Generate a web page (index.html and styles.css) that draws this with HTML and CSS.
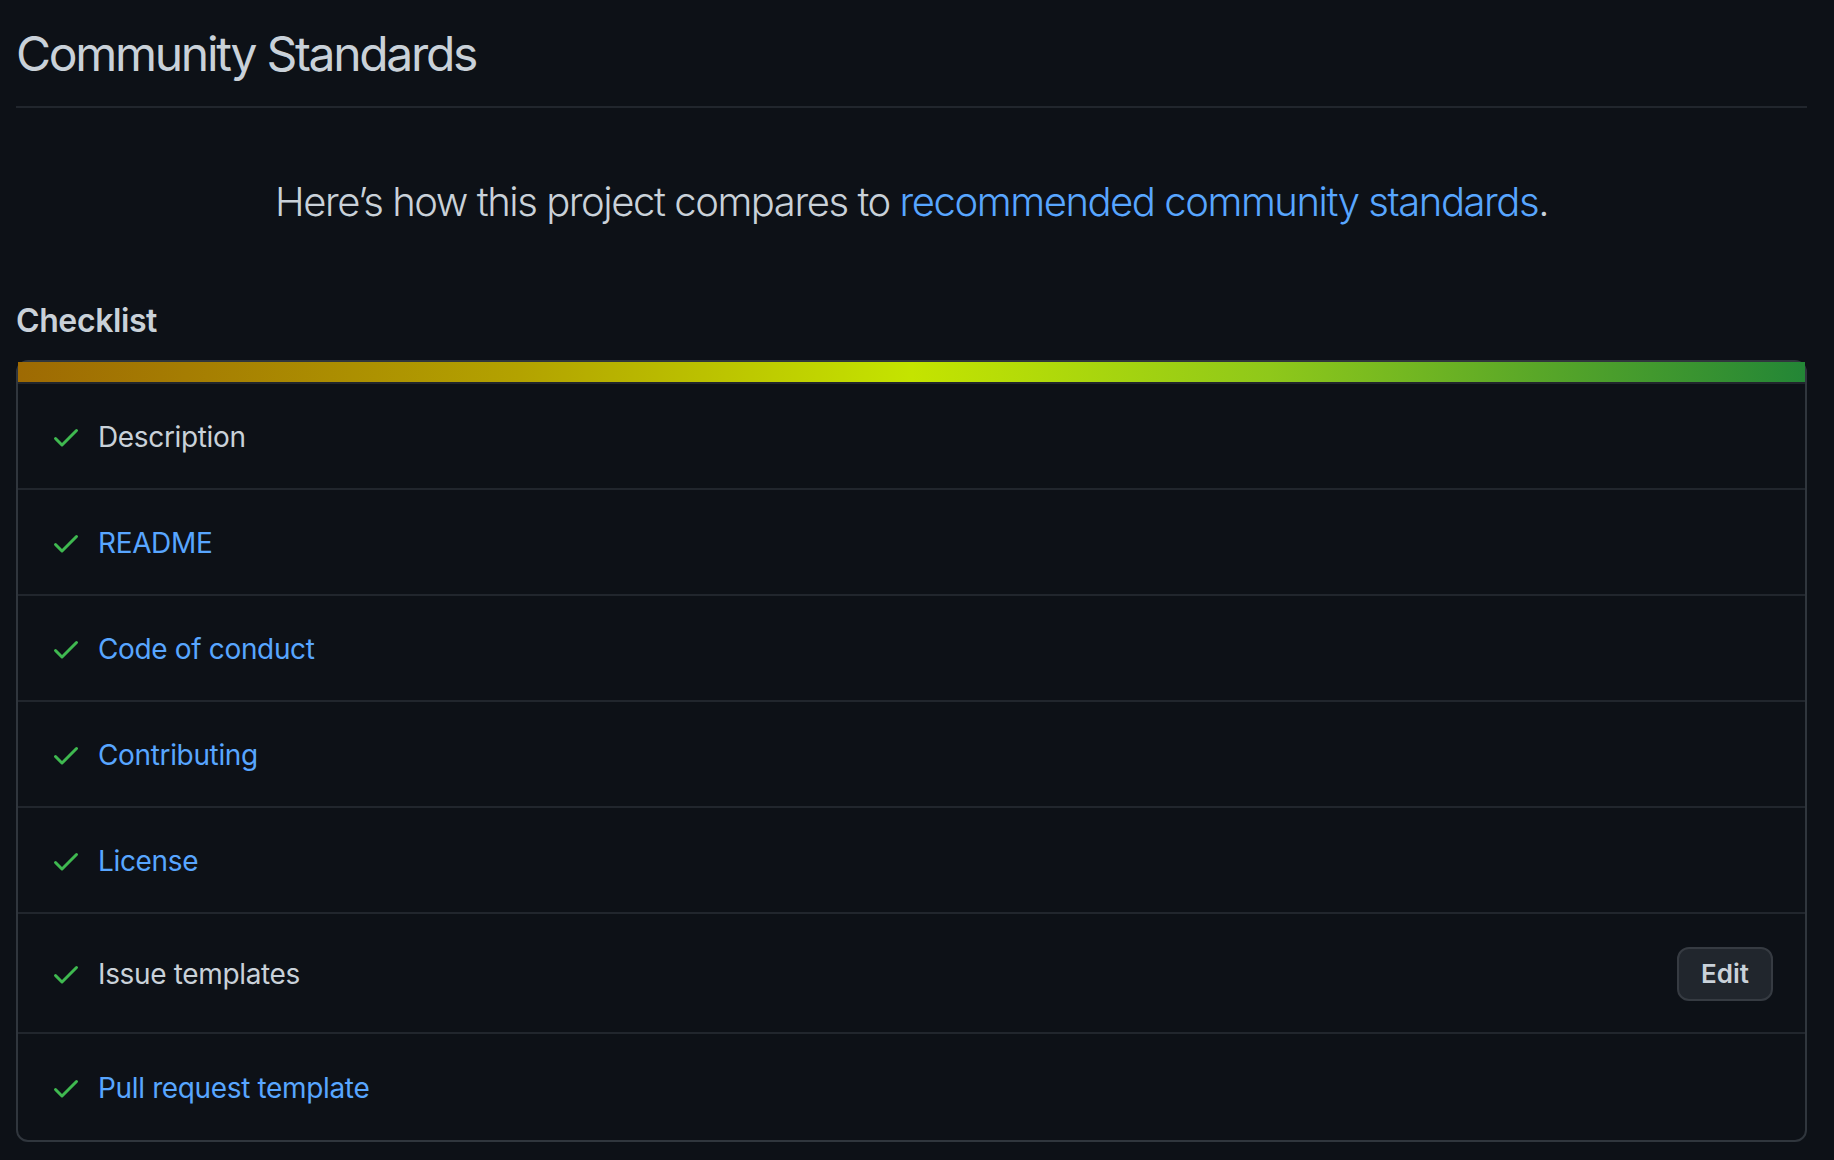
FILE: index.html
```html
<!DOCTYPE html>
<html lang="en">
<head>
<meta charset="utf-8">
<title>Community Standards</title>
<link rel="stylesheet" href="styles.css">
</head>
<body>
<main class="page">
  <h2 class="subhead">Community Standards</h2>
  <p class="lead">Here’s how this project compares to <a href="#" class="link">recommended community standards</a>.</p>
  <h3 class="section-title">Checklist</h3>
  <div class="box">
    <div class="progress"></div>
    <div class="row">
      <svg class="check" viewBox="0 0 16 16" width="32" height="32"><path d="M13.78 4.22a.75.75 0 0 1 0 1.060l-7.25 7.25a.75.75 0 0 1-1.06 0L2.22 9.28a.751.751 0 0 1 .018-1.042.751.751 0 0 1 1.042-.018L6 10.94l6.72-6.72a.75.75 0 0 1 1.06 0Z"/></svg>
      <span class="label">Description</span>
    </div>
    <div class="row">
      <svg class="check" viewBox="0 0 16 16" width="32" height="32"><path d="M13.78 4.22a.75.75 0 0 1 0 1.06l-7.25 7.25a.75.75 0 0 1-1.06 0L2.22 9.28a.751.751 0 0 1 .018-1.042.751.751 0 0 1 1.042-.018L6 10.94l6.72-6.72a.75.75 0 0 1 1.06 0Z"/></svg>
      <a href="#" class="label link">README</a>
    </div>
    <div class="row">
      <svg class="check" viewBox="0 0 16 16" width="32" height="32"><path d="M13.78 4.22a.75.75 0 0 1 0 1.06l-7.25 7.25a.75.75 0 0 1-1.06 0L2.22 9.28a.751.751 0 0 1 .018-1.042.751.751 0 0 1 1.042-.018L6 10.94l6.72-6.72a.75.75 0 0 1 1.06 0Z"/></svg>
      <a href="#" class="label link">Code of conduct</a>
    </div>
    <div class="row">
      <svg class="check" viewBox="0 0 16 16" width="32" height="32"><path d="M13.78 4.22a.75.75 0 0 1 0 1.06l-7.25 7.25a.75.75 0 0 1-1.06 0L2.22 9.28a.751.751 0 0 1 .018-1.042.751.751 0 0 1 1.042-.018L6 10.94l6.72-6.72a.75.75 0 0 1 1.06 0Z"/></svg>
      <a href="#" class="label link">Contributing</a>
    </div>
    <div class="row">
      <svg class="check" viewBox="0 0 16 16" width="32" height="32"><path d="M13.78 4.22a.75.75 0 0 1 0 1.06l-7.25 7.25a.75.75 0 0 1-1.06 0L2.22 9.28a.751.751 0 0 1 .018-1.042.751.751 0 0 1 1.042-.018L6 10.94l6.72-6.72a.75.75 0 0 1 1.06 0Z"/></svg>
      <a href="#" class="label link">License</a>
    </div>
    <div class="row">
      <svg class="check" viewBox="0 0 16 16" width="32" height="32"><path d="M13.78 4.22a.75.75 0 0 1 0 1.06l-7.25 7.25a.75.75 0 0 1-1.06 0L2.22 9.28a.751.751 0 0 1 .018-1.042.751.751 0 0 1 1.042-.018L6 10.94l6.72-6.72a.75.75 0 0 1 1.06 0Z"/></svg>
      <span class="label">Issue templates</span>
      <button class="btn" type="button">Edit</button>
    </div>
    <div class="row">
      <svg class="check" viewBox="0 0 16 16" width="32" height="32"><path d="M13.78 4.22a.75.75 0 0 1 0 1.06l-7.25 7.25a.75.75 0 0 1-1.06 0L2.22 9.28a.751.751 0 0 1 .018-1.042.751.751 0 0 1 1.042-.018L6 10.94l6.72-6.72a.75.75 0 0 1 1.06 0Z"/></svg>
      <a href="#" class="label link">Pull request template</a>
    </div>
  </div>
</main>
</body>
</html>
```

FILE: styles.css
```css
html, body {
  margin: 0;
  padding: 0;
  background: #0d1117;
}

body {
  font-family: Inter, "Liberation Sans", sans-serif;
  color: #c9d1d9;
}

.page {
  padding: 24px 27px 40px 16px;
}

.subhead {
  margin: 0;
  padding-bottom: 22px;
  border-bottom: 2px solid #21262d;
  font-size: 48px;
  line-height: 60px;
  font-weight: 400;
  letter-spacing: -2.3px;
  color: #c9d1d9;
}

.lead {
  margin: 64px 0 0;
  text-align: center;
  font-size: 40px;
  line-height: 60px;
  font-weight: 300;
  letter-spacing: -1.45px;
  color: #c9d1d9;
}

.link {
  color: #58a6ff;
  text-decoration: none;
}

.section-title {
  margin: 65px 0 15px;
  font-size: 32px;
  line-height: 48px;
  font-weight: 600;
  letter-spacing: -0.4px;
  color: #c9d1d9;
}

.box {
  border: 2px solid #30363d;
  border-radius: 12px;
}

.progress {
  height: 20px;
  border-bottom: 2px solid #21262d;
  background: linear-gradient(to right, #9e6a03 0%, #b3a200 28%, #c4e400 50%, #8fc81a 70%, #238636 100%);
}

.row {
  display: flex;
  align-items: center;
  padding: 33px 32px 31px;
  border-bottom: 2px solid #21262d;
}

.row:last-child {
  border-bottom: 0;
  padding-top: 34px;
  padding-bottom: 32px;
}

.check {
  flex: none;
  fill: #3fb950;
  margin-right: 16px;
}

.label {
  font-size: 28px;
  line-height: 40px;
  letter-spacing: -0.35px;
  flex: 1;
}

.btn {
  flex: none;
  font-family: inherit;
  font-size: 26px;
  font-weight: 600;
  line-height: 50px;
  padding: 0 22px;
  color: #c9d1d9;
  background: #21262d;
  border: 2px solid #363b42;
  border-radius: 12px;
}
```
